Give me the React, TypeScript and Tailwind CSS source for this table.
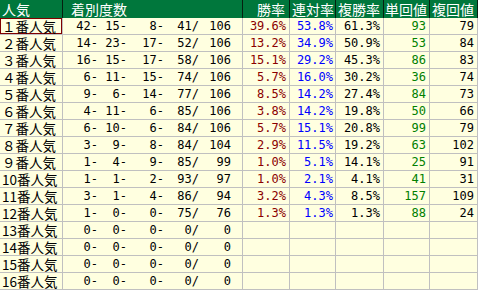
const rows: [string, number[], string, string, string, string, string][] = [
  ["１番人気", [42, 15, 8, 41, 106], "39.6%", "53.8%", "61.3%", "93", "79"],
  ["２番人気", [14, 23, 17, 52, 106], "13.2%", "34.9%", "50.9%", "53", "84"],
  ["３番人気", [16, 15, 17, 58, 106], "15.1%", "29.2%", "45.3%", "86", "83"],
  ["４番人気", [6, 11, 15, 74, 106], "5.7%", "16.0%", "30.2%", "36", "74"],
  ["５番人気", [9, 6, 14, 77, 106], "8.5%", "14.2%", "27.4%", "84", "73"],
  ["６番人気", [4, 11, 6, 85, 106], "3.8%", "14.2%", "19.8%", "50", "66"],
  ["７番人気", [6, 10, 6, 84, 106], "5.7%", "15.1%", "20.8%", "99", "79"],
  ["８番人気", [3, 9, 8, 84, 104], "2.9%", "11.5%", "19.2%", "63", "102"],
  ["９番人気", [1, 4, 9, 85, 99], "1.0%", "5.1%", "14.1%", "25", "91"],
  ["10番人気", [1, 1, 2, 93, 97], "1.0%", "2.1%", "4.1%", "41", "31"],
  ["11番人気", [3, 1, 4, 86, 94], "3.2%", "4.3%", "8.5%", "157", "109"],
  ["12番人気", [1, 0, 0, 75, 76], "1.3%", "1.3%", "1.3%", "88", "24"],
  ["13番人気", [0, 0, 0, 0, 0], "", "", "", "", ""],
  ["14番人気", [0, 0, 0, 0, 0], "", "", "", "", ""],
  ["15番人気", [0, 0, 0, 0, 0], "", "", "", "", ""],
  ["16番人気", [0, 0, 0, 0, 0], "", "", "", "", ""],
]

const jp = "font-['Noto_Sans_CJK_JP',sans-serif]"
const mono = "font-['DejaVu_Sans_Mono','Noto_Sans_CJK_JP',monospace] text-[12px]"

export default function App() {
  return (
    <div className="w-[478px] h-[291px] bg-white overflow-hidden">
      {/* Header */}
      <div className={`flex h-[18px] bg-[#00773c] text-white text-[14px] leading-[18px] ${jp}`}>
        <div className="w-[63px] border-r border-[#062010] pl-[2px]">人気</div>
        <div className="w-[180px] border-r border-[#062010] pl-[8px]">着別度数</div>
        <div className="w-[47px] border-r border-[#062010] text-right pr-[4px]">勝率</div>
        <div className="w-[46px] border-r border-[#062010] text-right pr-[1px]">連対率</div>
        <div className="w-[48px] border-r border-[#062010] text-right pr-[3px]">複勝率</div>
        <div className="w-[46px] border-r border-[#062010] text-right pr-[2px]">単回値</div>
        <div className="w-[48px] border-r border-[#062010] text-right pr-[3px]">複回値</div>
      </div>

      {/* Body */}
      {rows.map(([label, n, win, ren, fuku, tan, fk], i) => (
        <div key={label} className="flex h-[17px] bg-[#ffffe0] leading-[16px]">
          <div
            className={`w-[63px] border-r border-b border-[#c0c0c0] pl-[2px] text-[13.5px] text-black ${jp} ${
              i === 0 ? "ring-1 ring-inset ring-[#800000]" : ""
            }`}
          >
            {label}
          </div>
          <div className={`w-[180px] flex border-r border-b border-[#c0c0c0] text-black ${mono}`}>
            <span className="w-[35px] text-right">{n[0]}-</span>
            <span className="w-[29px] text-right">{n[1]}-</span>
            <span className="w-[37px] text-right">{n[2]}-</span>
            <span className="w-[35px] text-right">{n[3]}/</span>
            <span className="w-[32px] text-right">{n[4]}</span>
          </div>
          <div className={`w-[47px] border-r border-b border-[#c0c0c0] text-right pr-[3px] text-[#8b0000] ${mono}`}>{win}</div>
          <div className={`w-[46px] border-r border-b border-[#c0c0c0] text-right pr-[2px] text-[#0000ff] ${mono}`}>{ren}</div>
          <div className={`w-[48px] border-r border-b border-[#c0c0c0] text-right pr-[3px] text-black ${mono}`}>{fuku}</div>
          <div className={`w-[46px] border-r border-b border-[#c0c0c0] text-right pr-[3px] text-[#008000] ${mono}`}>{tan}</div>
          <div className={`w-[48px] border-r border-b border-[#c0c0c0] text-right pr-[3px] text-black ${mono}`}>{fk}</div>
        </div>
      ))}
    </div>
  )
}
